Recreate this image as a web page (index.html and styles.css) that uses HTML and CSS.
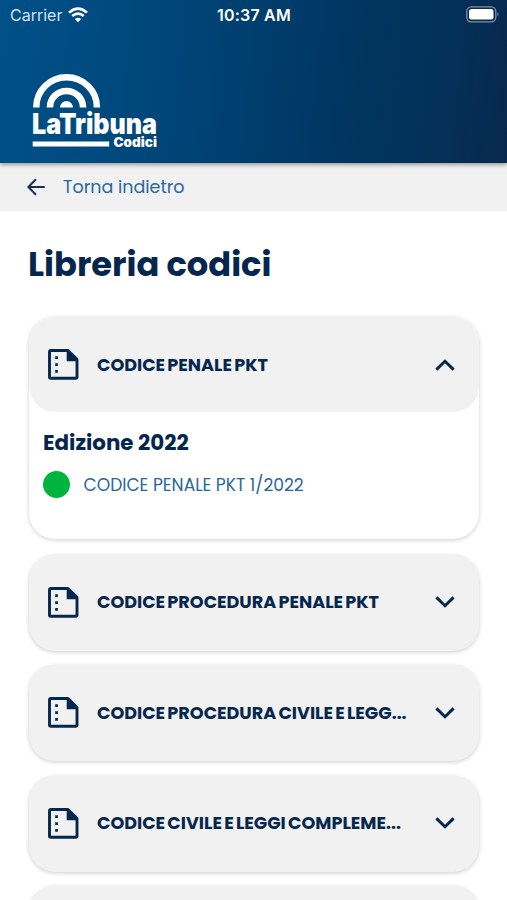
FILE: index.html
```
<!DOCTYPE html>
<html lang="it">
<head>
<meta charset="utf-8">
<title>LaTribuna Codici</title>
<link rel="stylesheet" href="styles.css">
</head>
<body>
<svg class="defs" width="0" height="0" aria-hidden="true">
  <symbol id="doc" viewBox="0 0 31 31">
    <path d="M3 1.500H20L29 10.400V28Q29 29.300 27.700 29.300H3Q1.500 29.300 1.500 28V3Q1.500 1.500 3 1.500Z" fill="none" stroke="currentColor" stroke-width="2.900" stroke-linejoin="round"/>
    <path d="M18.700 1.500V12.200H29.500V10L21 1.500Z" fill="currentColor"/>
    <path d="M7.200 7.300h2.700v2.700H7.200zM7.200 14.200h2.700v2.700H7.200zM7.200 21.100h2.700v2.700H7.200z" fill="currentColor"/>
  </symbol>
  <symbol id="down" viewBox="0 0 20 12"><path d="M1.400 1.400L10 9.800L18.600 1.400" fill="none" stroke="currentColor" stroke-width="2.900"/></symbol>
  <symbol id="up" viewBox="0 0 20 12"><path d="M1.400 10.600L10 2.200L18.600 10.600" fill="none" stroke="currentColor" stroke-width="2.900"/></symbol>
</svg>
<header class="top">
  <div class="status">
    <div class="carrier"><span class="carrier-name">Carrier</span>
      <svg width="20" height="16" viewBox="0 0 20 16" fill="none" stroke="#fff" stroke-width="2.600"><path d="M1 5.600Q10-2.400 19 5.600M4.200 9.100Q10 4.100 15.800 9.100"/><path d="M6.900 12Q10 9.300 13.100 12L10 15.200Z" fill="#fff" stroke="none"/></svg>
    </div>
    <span class="clock">10:37 AM</span>
    <svg class="battery" width="34" height="17" viewBox="0 0 34 17"><rect x=".8" y=".8" width="29" height="15" rx="4.500" fill="none" stroke="#8190a5" stroke-width="1.300"/><rect x="3" y="3" width="24.500" height="10.600" rx="2.500" fill="#fff"/><path d="M31.500 6Q33.500 8.300 31.500 10.600Z" fill="#8190a5"/></svg>
  </div>
  <svg class="logo" width="128" height="76" viewBox="0 0 128 76" fill="#fff">
    <g fill="none" stroke="#fff" stroke-width="6.500"><path d="M4.300 33.500V33A30.300 29.700 0 0 1 64.900 33V33.500"/><path d="M18 33.500V33A16.500 16 0 0 1 51 33V33.500"/></g>
    <path d="M28 33.500A6.500 6.500 0 0 1 41 33.500Z"/>
    <text class="brand" x="0" y="59.500" textLength="125" lengthAdjust="spacingAndGlyphs">LaTribuna</text>
    <rect x=".7" y="67.500" width="76.500" height="5"/>
    <text class="sub" x="81.500" y="73" textLength="43.500" lengthAdjust="spacingAndGlyphs">Codici</text>
  </svg>
</header>
<nav class="back">
  <svg width="18" height="18" viewBox="0 0 18 18" fill="none" stroke="#172d55" stroke-width="2"><path d="M17.800 9H1.500M9 1.200L1.300 9L9 16.800"/></svg>
  <span class="back-label">Torna indietro</span>
</nav>
<main class="content">
  <h1 class="title">Libreria codici</h1>
  <section class="card open">
    <div class="head"><svg class="doc"><use href="#doc"/></svg><span class="name">CODICE PENALE PKT</span><svg class="chev"><use href="#up"/></svg></div>
    <h2 class="edition">Edizione 2022</h2>
    <div class="entry"><span class="dot"></span><span class="link">CODICE PENALE PKT 1/2022</span></div>
  </section>
  <section class="card"><div class="head"><svg class="doc"><use href="#doc"/></svg><span class="name">CODICE PROCEDURA PENALE PKT</span><svg class="chev"><use href="#down"/></svg></div></section>
  <section class="card"><div class="head"><svg class="doc"><use href="#doc"/></svg><span class="name">CODICE PROCEDURA CIVILE E LEGG...</span><svg class="chev"><use href="#down"/></svg></div></section>
  <section class="card"><div class="head"><svg class="doc"><use href="#doc"/></svg><span class="name">CODICE CIVILE E LEGGI COMPLEME...</span><svg class="chev"><use href="#down"/></svg></div></section>
  <section class="card"></section>
</main>
</body>
</html>
```
FILE: styles.css
```
* { box-sizing: border-box; }
html, body { height: 900px; overflow: hidden; }
body { margin: 0; background: #fff; color: #05264d; font-family: Poppins, Inter, sans-serif; }
svg { display: block; flex: none; }
.defs { position: absolute; }
.top { position: relative; height: 163px; padding: 0 9px 0 10px; background: linear-gradient(96deg, #005189 0%, #004578 35%, #003763 65%, #033158 85%, #08284f 100%); box-shadow: 0 2px 4px rgba(0,0,0,.35); }
.status { display: grid; grid-template-columns: 1fr auto 1fr; align-items: center; height: 30px; color: #fff; font-family: Inter, sans-serif; }
.carrier { display: flex; align-items: center; gap: 6px; }
.carrier-name { font-size: 16px; color: #d5e2ed; }
.clock { font-size: 16px; font-weight: 600; letter-spacing: .2px; }
.battery { justify-self: end; margin-right: -2px; margin-top: -2px; }
.logo { margin: 44px 0 0 22px; }
.brand { font: 900 28.5px Inter, sans-serif; }
.sub { font: 900 13.5px Inter, sans-serif; }
.back { display: flex; align-items: center; gap: 18px; height: 48px; padding-left: 27px; background: #f1f1f1; color: #29689d; font-size: 17.5px; white-space: nowrap; }
.content { padding: 0 28px 0 29px; }
.title { margin: 31px 0 0; height: 44px; line-height: 45px; font-size: 33.7px; font-weight: 700; white-space: nowrap; text-indent: -1px; }
.card { height: 96px; margin-bottom: 14.5px; border-radius: 26px; background: #f1f1f1; box-shadow: 0 1px 4px rgba(0,0,0,.2); }
.open { height: 222px; margin-top: 31px; margin-bottom: 15.5px; background: #fff; }
.head { display: flex; align-items: center; height: 95px; padding: 0 24px 0 19px; border-radius: 26px; background: #f1f1f1; }
.doc { width: 31px; height: 31px; }
.name { flex: 1; margin-left: 18px; font-size: 17.6px; font-weight: 700; word-spacing: -1.5px; white-space: nowrap; }
.chev { width: 20px; height: 12px; }
.edition { margin: 15px 0 0 14px; line-height: 32px; font-size: 21.4px; font-weight: 700; white-space: nowrap; }
.entry { display: flex; align-items: center; gap: 13.5px; height: 27px; margin: 12px 0 0 14px; color: #29689d; font-size: 17.1px; white-space: nowrap; }
.dot { width: 27px; height: 27px; border-radius: 50%; background: #00b53f; }
```
